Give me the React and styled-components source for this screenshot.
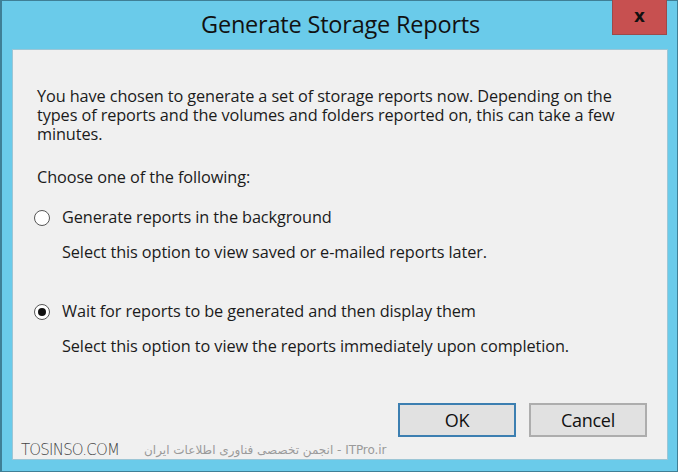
import React from 'react';
import styled, { createGlobalStyle } from 'styled-components';

const GlobalStyle = createGlobalStyle`
  html, body {
    margin: 0;
    padding: 0;
    background: #6acbea;
  }
  * { box-sizing: border-box; }
`;

const Window = styled.div`
  width: 678px;
  height: 472px;
  background: #6acbea;
  border: 1px solid #3f7f96;
  border-left-width: 2px;
  display: flex;
  flex-direction: column;
  font-family: 'Open Sans', 'Noto Sans', sans-serif;
`;

const TitleBar = styled.div`
  height: 48px;
  position: relative;
  display: flex;
  align-items: center;
  justify-content: center;
`;

const Title = styled.h1`
  margin: 0 0 2px 2px;
  font-size: 23.5px;
  font-weight: 400;
  color: #111;
  letter-spacing: -0.2px;
`;

const CloseButton = styled.div`
  position: absolute;
  top: -1px;
  right: 10px;
  width: 55px;
  height: 35px;
  background: #c75050;
  border: 1px solid #9c4a4a;
  border-top: none;
  display: flex;
  align-items: center;
  justify-content: center;
  font-family: 'DejaVu Sans', sans-serif;
  font-weight: 700;
  font-size: 17px;
  color: #111;
  padding-bottom: 3px;
`;

const Panel = styled.div`
  flex: 1;
  margin: 0 9px 11px 10px;
  background: #f0f0f0;
  border: 1px solid #9cc6d6;
  display: flex;
  flex-direction: column;
  padding: 37px 0 0 24px;
  color: #1b1b1b;
  font-size: 16.3px;
  line-height: 19px;
  letter-spacing: -0.1px;
`;

const Para = styled.p`
  margin: 0;
  margin-top: ${(p) => p.top || 0}px;
  padding-left: ${(p) => p.indent || 0}px;
`;

const RadioRow = styled.label`
  display: flex;
  align-items: center;
  gap: 12px;
  margin-top: ${(p) => p.top}px;
  margin-left: -3px;
`;

const RadioCircle = styled.span`
  width: 16px;
  height: 16px;
  border-radius: 50%;
  border: 1px solid #555;
  background: #fff;
  display: flex;
  align-items: center;
  justify-content: center;

  &::after {
    content: '';
    width: 8px;
    height: 8px;
    border-radius: 50%;
    background: ${(p) => (p.checked ? '#111' : 'transparent')};
  }
`;

const ButtonRow = styled.div`
  display: flex;
  justify-content: flex-end;
  gap: 13px;
  margin-top: 47px;
  padding-right: 20px;
`;

const Button = styled.div`
  width: 118px;
  height: 34px;
  display: flex;
  align-items: center;
  justify-content: center;
  background: #e1e1e1;
  border: ${(p) => (p.primary ? '2px solid #3c7fb1' : '2px solid #adadad')};
  font-size: 18px;
  letter-spacing: -0.3px;
  color: #111;
`;

const Footer = styled.div`
  display: flex;
  align-items: center;
  gap: 25px;
  margin-top: 5px;
  margin-left: -16px;
  height: 16px;
`;

const SiteName = styled.span`
  font-family: 'DejaVu Sans', sans-serif;
  font-weight: 300;
  font-size: 15px;
  color: #444;
  letter-spacing: -0.8px;
`;

const Slogan = styled.span`
  font-family: 'DejaVu Sans', sans-serif;
  font-size: 12px;
  color: #9a9a9a;
`;

export default function App() {
  return (
    <>
      <GlobalStyle />
      <Window>
        <TitleBar>
          <Title>Generate Storage Reports</Title>
          <CloseButton>x</CloseButton>
        </TitleBar>
        <Panel>
          <Para>
            You have chosen to generate a set of storage reports now. Depending on the
            <br />
            types of reports and the volumes and folders reported on, this can take a few
            <br />
            minutes.
          </Para>
          <Para top={24}>Choose one of the following:</Para>
          <RadioRow top={21}>
            <RadioCircle />
            Generate reports in the background
          </RadioRow>
          <Para top={16} indent={25}>
            Select this option to view saved or e-mailed reports later.
          </Para>
          <RadioRow top={40}>
            <RadioCircle checked />
            Wait for reports to be generated and then display them
          </RadioRow>
          <Para top={16} indent={25}>
            Select this option to view the reports immediately upon completion.
          </Para>
          <ButtonRow>
            <Button primary>OK</Button>
            <Button>Cancel</Button>
          </ButtonRow>
          <Footer>
            <SiteName>TOSINSO.COM</SiteName>
            <Slogan>انجمن تخصصی فناوری اطلاعات ایران - ITPro.ir</Slogan>
          </Footer>
        </Panel>
      </Window>
    </>
  );
}
